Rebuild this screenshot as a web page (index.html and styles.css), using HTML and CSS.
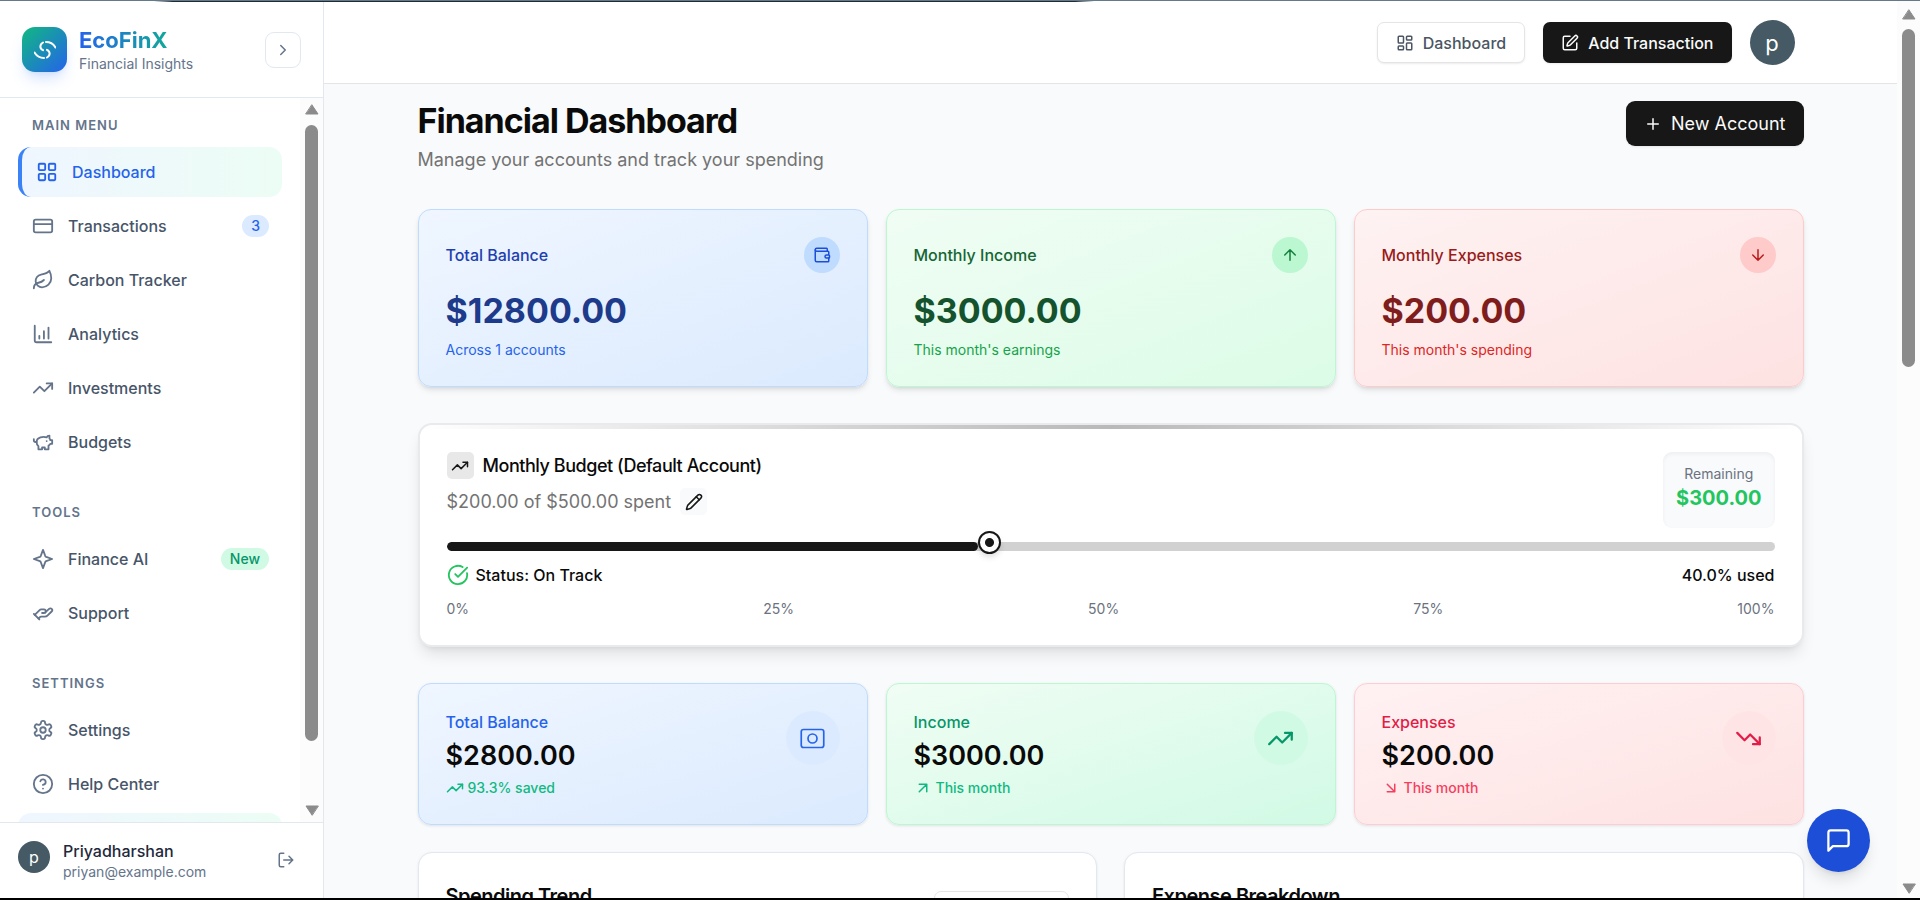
FILE: index.html
```html
<!DOCTYPE html>
<html lang="en">
<head>
<meta charset="utf-8">
<meta name="viewport" content="width=device-width, initial-scale=1">
<title>EcoFinX</title>
<link rel="stylesheet" href="styles.css">
</head>
<body>
<svg class="sprite" aria-hidden="true">
  <symbol id="swirl" viewBox="0 0 22 18"><path d="M9 1.5C5.5 3.5 5.5 7.5 9 9.2M12 1c4 0 7.500 2 9.500 5.500M13 16.500c3.500-2 3.500-6 0-7.700M10 17C6 17 2.500 15 .5 11.500"/></symbol>
  <symbol id="chevron" viewBox="0 0 24 24"><path d="m9 18 6-6-6-6"/></symbol>
  <symbol id="grid" viewBox="0 0 24 24"><rect x="3" y="3" width="7" height="7" rx="1"/><rect x="14" y="3" width="7" height="7" rx="1"/><rect x="14" y="14" width="7" height="7" rx="1"/><rect x="3" y="14" width="7" height="7" rx="1"/></symbol>
  <symbol id="layout" viewBox="0 0 24 24"><rect x="3" y="3" width="7" height="9" rx="1"/><rect x="14" y="3" width="7" height="5" rx="1"/><rect x="14" y="12" width="7" height="9" rx="1"/><rect x="3" y="16" width="7" height="5" rx="1"/></symbol>
  <symbol id="card" viewBox="0 0 24 24"><rect x="2" y="5" width="20" height="14" rx="2"/><path d="M2 10h20"/></symbol>
  <symbol id="leaf" viewBox="0 0 24 24"><path d="M11 20A7 7 0 0 1 9.800 6.100C15.500 5 17 4.480 19 2c1 2 2 4.180 2 8 0 5.500-4.780 10-10 10Z"/><path d="M2 21c0-3 1.850-5.360 5.080-6C9.500 14.520 12 13 13 12"/></symbol>
  <symbol id="chart" viewBox="0 0 24 24"><path d="M3 3v16a2 2 0 0 0 2 2h16M13 17V9M18 17V5M8 17v-3"/></symbol>
  <symbol id="up" viewBox="0 0 24 24"><path d="M16 7h6v6"/><path d="m22 7-8.500 8.500-5-5L2 17"/></symbol>
  <symbol id="down" viewBox="0 0 24 24"><path d="M16 17h6v-6"/><path d="m22 17-8.500-8.500-5 5L2 7"/></symbol>
  <symbol id="piggy" viewBox="0 0 24 24"><path d="M19 5c-1.500 0-2.800 1.400-3 2-3.500-1.500-11-.3-11 5 0 1.800 0 3 2 4.500V20h4v-2h3v2h4v-4c1-.5 1.700-1 2-2h2v-4h-2c0-1-.5-1.500-1-2V5z"/><path d="M2 9v1c0 1.100.9 2 2 2h1M16 11h.01"/></symbol>
  <symbol id="sparkle" viewBox="0 0 24 24"><path d="m12 2 2.400 6.500a2 2 0 0 0 1.100 1.100L22 12l-6.500 2.400a2 2 0 0 0-1.100 1.100L12 22l-2.400-6.500a2 2 0 0 0-1.100-1.100L2 12l6.500-2.400a2 2 0 0 0 1.100-1.100z"/></symbol>
  <symbol id="hand" viewBox="0 0 24 24"><path d="M11 12h2a2 2 0 1 0 0-4h-3c-.6 0-1.100.2-1.400.6L3 14"/><path d="m7 18 1.600-1.400c.3-.4.8-.6 1.400-.6h4c1.100 0 2.100-.4 2.800-1.200l4.600-4.400a2 2 0 0 0-2.750-2.910l-4.200 3.900"/><path d="m2 13 6 6"/></symbol>
  <symbol id="gear" viewBox="0 0 24 24"><path d="M12.220 2h-.44a2 2 0 0 0-2 2v.18a2 2 0 0 1-1 1.730l-.43.25a2 2 0 0 1-2 0l-.15-.08a2 2 0 0 0-2.730.73l-.22.38a2 2 0 0 0 .73 2.730l.15.1a2 2 0 0 1 1 1.720v.51a2 2 0 0 1-1 1.740l-.15.09a2 2 0 0 0-.73 2.730l.22.38a2 2 0 0 0 2.730.73l.15-.08a2 2 0 0 1 2 0l.43.25a2 2 0 0 1 1 1.730V20a2 2 0 0 0 2 2h.44a2 2 0 0 0 2-2v-.18a2 2 0 0 1 1-1.730l.43-.25a2 2 0 0 1 2 0l.15.08a2 2 0 0 0 2.730-.73l.22-.39a2 2 0 0 0-.73-2.730l-.15-.08a2 2 0 0 1-1-1.740v-.5a2 2 0 0 1 1-1.740l.15-.09a2 2 0 0 0 .73-2.730l-.22-.38a2 2 0 0 0-2.730-.73l-.15.08a2 2 0 0 1-2 0l-.43-.25a2 2 0 0 1-1-1.730V4a2 2 0 0 0-2-2z"/><circle cx="12" cy="12" r="3"/></symbol>
  <symbol id="help" viewBox="0 0 24 24"><circle cx="12" cy="12" r="10"/><path d="M9.090 9a3 3 0 0 1 5.830 1c0 2-3 3-3 3M12 17h.01"/></symbol>
  <symbol id="logout" viewBox="0 0 24 24"><path d="M9 21H5a2 2 0 0 1-2-2V5a2 2 0 0 1 2-2h4M16 17l5-5-5-5M21 12H9"/></symbol>
  <symbol id="edit" viewBox="0 0 24 24"><path d="M12 3H5a2 2 0 0 0-2 2v14a2 2 0 0 0 2 2h14a2 2 0 0 0 2-2v-7"/><path d="M18.375 2.625a1 1 0 0 1 3 3l-9.013 9.014a2 2 0 0 1-.853.505l-2.873.84a.5.5 0 0 1-.62-.62l.84-2.873a2 2 0 0 1 .506-.852z"/></symbol>
  <symbol id="plus" viewBox="0 0 24 24"><path d="M5 12h14M12 5v14"/></symbol>
  <symbol id="wallet" viewBox="0 0 24 24"><path d="M19 7V4a1 1 0 0 0-1-1H5a2 2 0 0 0 0 4h15a1 1 0 0 1 1 1v4h-3a2 2 0 0 0 0 4h3a1 1 0 0 0 1-1v-2a1 1 0 0 0-1-1"/><path d="M3 5v14a2 2 0 0 0 2 2h15a1 1 0 0 0 1-1v-4"/></symbol>
  <symbol id="arrow-up" viewBox="0 0 24 24"><path d="m5 12 7-7 7 7M12 19V5"/></symbol>
  <symbol id="arrow-down" viewBox="0 0 24 24"><path d="M12 5v14M19 12l-7 7-7-7"/></symbol>
  <symbol id="pencil" viewBox="0 0 24 24"><path d="M21.174 6.812a1 1 0 0 0-3.986-3.987L3.842 16.174a2 2 0 0 0-.5.83l-1.321 4.352a.5.5 0 0 0 .623.622l4.353-1.320a2 2 0 0 0 .83-.497z"/><path d="m15 5 4 4"/></symbol>
  <symbol id="check" viewBox="0 0 24 24"><path d="M21.801 10A10 10 0 1 1 17 3.335"/><path d="m9 11 3 3L22 4"/></symbol>
  <symbol id="note" viewBox="0 0 24 24"><rect x="2" y="4" width="20" height="16" rx="2"/><circle cx="12" cy="12" r="4"/></symbol>
  <symbol id="ne" viewBox="0 0 24 24"><path d="M7 7h10v10M7 17 17 7"/></symbol>
  <symbol id="se" viewBox="0 0 24 24"><path d="m7 7 10 10M17 7v10H7"/></symbol>
  <symbol id="chat" viewBox="0 0 24 24"><path d="M21 15a2 2 0 0 1-2 2H7l-4 4V5a2 2 0 0 1 2-2h14a2 2 0 0 1 2 2z"/></symbol>
  <symbol id="tri-up" viewBox="0 0 14 11"><path d="M7 1 13 10H1z"/></symbol>
  <symbol id="tri-down" viewBox="0 0 14 11"><path d="M7 10 1 1h12z"/></symbol>
</svg>

<div class="app">
  <aside class="sidebar">
    <div class="brand">
      <div class="brand-mark"><svg class="brand-icon"><use href="#swirl"/></svg></div>
      <div class="brand-text">
        <div class="brand-name">EcoFinX</div>
        <div class="brand-sub">Financial Insights</div>
      </div>
      <button class="collapse" type="button" aria-label="Toggle sidebar"><svg class="icon-sm"><use href="#chevron"/></svg></button>
    </div>
    <div class="nav-area">
      <nav class="nav">
        <section class="nav-group">
          <h2 class="nav-title">MAIN MENU</h2>
          <a class="nav-item active" href="#"><svg class="icon-md"><use href="#grid"/></svg><span>Dashboard</span></a>
          <a class="nav-item" href="#"><svg class="icon-md"><use href="#card"/></svg><span>Transactions</span><span class="pill pill-blue">3</span></a>
          <a class="nav-item" href="#"><svg class="icon-md"><use href="#leaf"/></svg><span>Carbon Tracker</span></a>
          <a class="nav-item" href="#"><svg class="icon-md"><use href="#chart"/></svg><span>Analytics</span></a>
          <a class="nav-item" href="#"><svg class="icon-md"><use href="#up"/></svg><span>Investments</span></a>
          <a class="nav-item" href="#"><svg class="icon-md"><use href="#piggy"/></svg><span>Budgets</span></a>
        </section>
        <section class="nav-group">
          <h2 class="nav-title">TOOLS</h2>
          <a class="nav-item" href="#"><svg class="icon-md"><use href="#sparkle"/></svg><span>Finance AI</span><span class="pill pill-green">New</span></a>
          <a class="nav-item" href="#"><svg class="icon-md"><use href="#hand"/></svg><span>Support</span></a>
        </section>
        <section class="nav-group">
          <h2 class="nav-title">SETTINGS</h2>
          <a class="nav-item" href="#"><svg class="icon-md"><use href="#gear"/></svg><span>Settings</span></a>
          <a class="nav-item" href="#"><svg class="icon-md"><use href="#help"/></svg><span>Help Center</span></a>
          <div class="promo"></div>
        </section>
      </nav>
      <div class="scrollbar nav-scroll" aria-hidden="true">
        <svg class="tri"><use href="#tri-up"/></svg>
        <div class="rail"><div class="thumb"></div></div>
        <svg class="tri"><use href="#tri-down"/></svg>
      </div>
    </div>
    <div class="profile">
      <div class="avatar avatar-sm">p</div>
      <div class="profile-text">
        <div class="profile-name">Priyadharshan</div>
        <div class="profile-mail">priyan@example.com</div>
      </div>
      <button class="logout" type="button" aria-label="Log out"><svg class="icon-sm"><use href="#logout"/></svg></button>
    </div>
  </aside>

  <div class="page">
    <header class="topbar">
      <div class="topbar-inner">
        <button class="btn btn-light" type="button"><svg class="icon-sm"><use href="#layout"/></svg>Dashboard</button>
        <button class="btn btn-dark" type="button"><svg class="icon-sm"><use href="#edit"/></svg>Add Transaction</button>
        <div class="avatar avatar-lg">p</div>
      </div>
    </header>
    <main class="content">
      <div class="heading">
        <div>
          <h1 class="title">Financial Dashboard</h1>
          <p class="subtitle">Manage your accounts and track your spending</p>
        </div>
        <button class="btn btn-dark btn-new" type="button"><svg class="icon-sm"><use href="#plus"/></svg>New Account</button>
      </div>

      <div class="trio">
        <section class="stat blue">
          <div class="stat-head"><h2 class="stat-label">Total Balance</h2><div class="dot"><svg class="icon-sm"><use href="#wallet"/></svg></div></div>
          <div class="stat-value">$12800.00</div>
          <p class="stat-note">Across 1 accounts</p>
        </section>
        <section class="stat green">
          <div class="stat-head"><h2 class="stat-label">Monthly Income</h2><div class="dot"><svg class="icon-sm"><use href="#arrow-up"/></svg></div></div>
          <div class="stat-value">$3000.00</div>
          <p class="stat-note">This month's earnings</p>
        </section>
        <section class="stat red">
          <div class="stat-head"><h2 class="stat-label">Monthly Expenses</h2><div class="dot"><svg class="icon-sm"><use href="#arrow-down"/></svg></div></div>
          <div class="stat-value">$200.00</div>
          <p class="stat-note">This month's spending</p>
        </section>
      </div>

      <section class="budget">
        <div class="budget-glow"></div>
        <div class="budget-head">
          <div class="budget-info">
            <div class="budget-row"><div class="chip"><svg class="icon-sm"><use href="#up"/></svg></div><h2 class="budget-title">Monthly Budget (Default Account)</h2></div>
            <div class="budget-row"><p class="budget-spent">$200.00 of $500.00 spent</p><button class="chip chip-edit" type="button" aria-label="Edit budget"><svg class="icon-sm"><use href="#pencil"/></svg></button></div>
          </div>
          <div class="remaining"><div class="remaining-label">Remaining</div><div class="remaining-value">$300.00</div></div>
        </div>
        <div class="meter">
          <progress class="bar" value="40" max="100" aria-label="Budget used"></progress>
          <span class="marker" style="left:40%"></span>
        </div>
        <div class="status"><span class="status-left"><svg class="icon-md ok"><use href="#check"/></svg>Status: On Track</span><span>40.0% used</span></div>
        <div class="scale"><span>0%</span><span>25%</span><span>50%</span><span>75%</span><span>100%</span></div>
      </section>

      <div class="trio">
        <section class="sum sum-blue">
          <div>
            <h2 class="sum-label">Total Balance</h2>
            <div class="sum-value">$2800.00</div>
            <p class="sum-note"><svg class="icon-sm"><use href="#up"/></svg>93.3% saved</p>
          </div>
          <div class="orb"><svg class="icon-lg thin"><use href="#note"/></svg></div>
        </section>
        <section class="sum sum-green">
          <div>
            <h2 class="sum-label">Income</h2>
            <div class="sum-value">$3000.00</div>
            <p class="sum-note"><svg class="icon-sm"><use href="#ne"/></svg>This month</p>
          </div>
          <div class="orb"><svg class="icon-lg"><use href="#up"/></svg></div>
        </section>
        <section class="sum sum-red">
          <div>
            <h2 class="sum-label">Expenses</h2>
            <div class="sum-value">$200.00</div>
            <p class="sum-note"><svg class="icon-sm"><use href="#se"/></svg>This month</p>
          </div>
          <div class="orb"><svg class="icon-lg"><use href="#down"/></svg></div>
        </section>
      </div>

      <div class="duo">
        <section class="panel"><h2 class="panel-title">Spending Trend</h2><select class="range" aria-label="Period"><option></option></select></section>
        <section class="panel"><h2 class="panel-title">Expense Breakdown</h2></section>
      </div>
    </main>
  </div>

  <div class="scrollbar page-scroll" aria-hidden="true">
    <svg class="tri"><use href="#tri-up"/></svg>
    <div class="rail"><div class="thumb"></div></div>
    <svg class="tri"><use href="#tri-down"/></svg>
  </div>
</div>
<div class="edge-top"></div>
<div class="edge-bottom"></div>
<button class="fab" type="button" aria-label="Open chat"><svg class="icon-lg"><use href="#chat"/></svg></button>
</body>
</html>
```
FILE: styles.css
```css
* { box-sizing: border-box; }
body {
  margin: 0;
  height: 100vh;
  overflow: hidden;
  font-family: Inter, "Liberation Sans", sans-serif;
  font-size: 16px;
  line-height: 22px;
  color: #0a0a0a;
  background: #f9fafc;
}
h1, h2, p { margin: 0; font-weight: 500; font-size: inherit; }
button { font: inherit; color: inherit; cursor: pointer; padding: 0; border: 0; background: none; }
a { color: inherit; text-decoration: none; }
svg { fill: none; stroke: currentColor; stroke-width: 2; stroke-linecap: round; stroke-linejoin: round; flex: none; display: block; }
.sprite { position: absolute; width: 0; height: 0; }
.icon-sm { width: 18px; height: 18px; }
.icon-md { width: 22px; height: 22px; }
.icon-lg { width: 27px; height: 27px; }
.thin { stroke-width: 1.5; }

.app { display: flex; height: 100vh; }

.sidebar { width: 324px; flex: none; display: flex; flex-direction: column; background: #fff; border-right: 1px solid #e2e8f0; }
.brand { display: flex; align-items: center; gap: 12px; height: 98px; padding: 2px 22px 0; border-bottom: 1px solid #e2e8f0; }
.brand-mark { display: flex; align-items: center; justify-content: center; width: 45px; height: 45px; border-radius: 13px; background: linear-gradient(135deg, #10b981, #2563eb); color: #fff; box-shadow: 0 10px 15px -3px rgba(59, 130, 246, .2), 0 4px 6px -4px rgba(59, 130, 246, .2); }
.brand-icon { width: 22px; height: 18px; overflow: visible; }
.brand-text { flex: 1; }
.brand-name { width: max-content; font-size: 22px; line-height: 28px; font-weight: 700; color: transparent; background: linear-gradient(90deg, #2563eb, #10a998); -webkit-background-clip: text; background-clip: text; }
.brand-sub { font-size: 14px; line-height: 20px; color: #64748b; }
.collapse { display: flex; align-items: center; justify-content: center; width: 36px; height: 36px; border: 1px solid #e2e8f0; border-radius: 9px; color: #64748b; background: #fff; }

.nav-area { flex: 1; min-height: 0; display: flex; }
.nav { flex: 1; overflow: hidden; padding: 18px 18px 0; display: flex; flex-direction: column; gap: 36px; }
.nav-group { display: flex; flex-direction: column; gap: 4px; flex: none; }
.nav-title { padding: 0 14px; margin-bottom: 9px; font-size: 13px; line-height: 18px; font-weight: 600; letter-spacing: 1px; color: #64748b; }
.nav-item { display: flex; align-items: center; gap: 14px; height: 50px; padding: 0 13px 0 14px; border-radius: 13px; font-weight: 500; color: #475569; }
.nav-item svg { color: #64748b; }
.nav-item.active { border-left: 4px solid #3b82f6; color: #2563eb; background: linear-gradient(90deg, #eff6ff, #ecfdf5); }
.nav-item.active svg { color: #2563eb; }
.pill { margin-left: auto; padding: 0 9px; border-radius: 11px; font-size: 14px; line-height: 22px; }
.pill-blue { background: #dbeafe; color: #2563eb; }
.pill-green { background: #d1fae5; color: #059669; }
.promo { height: 90px; border-radius: 13px; background: linear-gradient(90deg, #eff6ff, #ecfdf5); }

.scrollbar { flex: none; width: 23px; display: flex; flex-direction: column; align-items: center; background: #fcfcfc; color: #8b8b8b; }
.tri { width: 14px; height: 11px; fill: currentColor; stroke-width: 1; }
.rail { flex: 1; align-self: stretch; display: flex; justify-content: center; }
.thumb { width: 13px; border-radius: 7px; background: #8b8b8b; }
.nav-scroll { padding: 6px 0; }
.nav-scroll .rail { margin: 10px 0; }
.nav-scroll .thumb { height: 92%; }
.page-scroll { padding: 9px 0 6px; }
.page-scroll .rail { margin: 9px 0; }
.page-scroll .thumb { height: 40%; }

.profile { flex: none; display: flex; align-items: flex-start; gap: 13px; height: 78px; padding: 18px; border-top: 1px solid #e2e8f0; }
.avatar { display: flex; align-items: center; justify-content: center; flex: none; border-radius: 50%; background: #455a64; color: #fff; }
.avatar-sm { width: 32px; height: 32px; }
.avatar-lg { width: 45px; height: 45px; font-size: 22px; }
.profile-text { flex: 1; }
.profile-name { font-weight: 500; line-height: 20px; color: #1e293b; }
.profile-mail { font-size: 14px; line-height: 22px; color: #64748b; }
.logout { color: #64748b; padding: 10px; }

.page { flex: 1; min-width: 0; overflow: hidden; }
.topbar { background: #fff; border-bottom: 1px solid #e5e5e5; }
.topbar-inner { display: flex; align-items: center; justify-content: flex-end; gap: 18px; max-width: 1440px; height: 83px; margin: 0 auto; padding: 2px 36px 0; }
.btn { display: flex; align-items: center; gap: 9px; height: 41px; padding: 0 18px; border-radius: 7px; font-weight: 500; box-shadow: 0 1px 2px rgba(0, 0, 0, .08); }
.btn-light { border: 1px solid #e5e5e5; background: #fff; color: #4b5563; }
.btn-dark { background: #171717; color: #fafafa; }
.btn-new { height: 45px; border-radius: 9px; font-size: 18px; font-weight: 400; }

.content { max-width: 1440px; margin: 0 auto; padding: 17px 27px 0; display: flex; flex-direction: column; gap: 36px; }
.heading { display: flex; justify-content: space-between; align-items: flex-start; }
.title { font-size: 34px; line-height: 40px; font-weight: 700; letter-spacing: -1px; }
.subtitle { margin-top: 5px; font-size: 18px; line-height: 27px; font-weight: 400; color: #737373; }

.trio { display: grid; grid-template-columns: repeat(3, 1fr); gap: 18px; }
.stat { padding: 27px; border: 1px solid; border-radius: 13px; box-shadow: 0 4px 6px -1px rgba(0, 0, 0, .1), 0 2px 4px -2px rgba(0, 0, 0, .1); }
.stat-head { display: flex; justify-content: space-between; align-items: center; margin-bottom: 18px; }
.dot { display: flex; align-items: center; justify-content: center; width: 36px; height: 36px; border-radius: 50%; }
.stat-value { font-size: 34px; line-height: 40px; font-weight: 700; }
.stat-note { margin-top: 10px; font-size: 14px; line-height: 18px; font-weight: 400; }
.blue { border-color: #bfdbfe; background: linear-gradient(to bottom right, #eff6ff, #dbeafe); color: #1e3a8a; }
.blue .stat-label { color: #1e40af; }
.blue .stat-note { color: #2563eb; }
.blue .dot { background: #bfdbfe; color: #1d4ed8; }
.green { border-color: #bbf7d0; background: linear-gradient(to bottom right, #f0fdf4, #dcfce7); color: #14532d; }
.green .stat-label { color: #166534; }
.green .stat-note { color: #16a34a; }
.green .dot { background: #bbf7d0; color: #15803d; }
.red { border-color: #fecaca; background: linear-gradient(to bottom right, #fef2f2, #fee2e2); color: #7f1d1d; }
.red .stat-label { color: #991b1b; }
.red .stat-note { color: #dc2626; }
.red .dot { background: #fecaca; color: #b91c1c; }

.budget { display: flex; flex-direction: column; overflow: hidden; border: 2px solid #e8eaec; border-radius: 14px; background: #fff; padding: 0 27px 27px; box-shadow: 0 10px 15px -3px rgba(0, 0, 0, .1), 0 4px 6px -4px rgba(0, 0, 0, .1); }
.budget-glow { height: 4px; margin: 0 -27px 23px; background: linear-gradient(90deg, transparent, rgba(23, 23, 23, .3), transparent); }
.budget-head { display: flex; justify-content: space-between; height: 76px; }
.budget-info { display: flex; flex-direction: column; gap: 9px; }
.budget-row { display: flex; align-items: center; gap: 9px; height: 27px; }
.chip { display: flex; align-items: center; justify-content: center; width: 27px; height: 27px; border-radius: 5px; background: #e8e8e8; color: #171717; }
.chip-edit { background: #f8fafc; }
.budget-title { font-size: 18px; letter-spacing: -.025em; }
.budget-spent { font-size: 18px; font-weight: 400; color: #737373; }
.remaining { padding: 12px 13px; border-radius: 9px; text-align: center; background: #f8fafc; box-shadow: inset 0 2px 4px rgba(0, 0, 0, .05); }
.remaining-label { font-size: 14px; line-height: 20px; color: #6b7280; }
.remaining-value { font-size: 20px; line-height: 28px; font-weight: 700; color: #22c55e; }
.meter { position: relative; height: 9px; margin-top: 14px; }
.bar { display: block; width: 100%; height: 9px; appearance: none; border: 0; border-radius: 5px; overflow: hidden; background: #d1d1d1; }
.bar::-webkit-progress-bar { background: #d1d1d1; }
.bar::-webkit-progress-value { background: #171717; border-radius: 5px; }
.marker { position: absolute; top: -11px; width: 23px; height: 23px; border: 2px solid #171717; border-radius: 50%; background: radial-gradient(circle, #171717 4px, #fff 5px); box-shadow: 0 4px 6px -1px rgba(0, 0, 0, .15); }
.status { display: flex; justify-content: space-between; align-items: center; margin-top: 13px; font-weight: 500; }
.status-left { display: flex; align-items: center; gap: 7px; }
.ok { color: #22c55e; }
.scale { display: flex; justify-content: space-between; margin-top: 14px; font-size: 14px; line-height: 18px; color: #6b7280; }

.sum { display: flex; justify-content: space-between; align-items: flex-start; padding: 27px; border: 1px solid; border-radius: 13px; box-shadow: 0 1px 3px rgba(0, 0, 0, .1); }
.sum-value { margin-top: 5px; font-size: 27px; line-height: 36px; font-weight: 600; }
.sum-note { display: flex; align-items: center; gap: 4px; margin-top: 5px; font-size: 14px; line-height: 18px; color: #10b981; }
.orb { display: flex; align-items: center; justify-content: center; width: 54px; height: 54px; border-radius: 50%; }
.sum-blue { border-color: #bfdbfe; background: linear-gradient(to bottom right, #eff6ff, #dbeafe); }
.sum-blue .sum-label { color: #2563eb; }
.sum-blue .orb { background: #dbeafe; color: #2563eb; }
.sum-green { border-color: #bbf7d0; background: linear-gradient(to bottom right, #f0fdf4, #d1fae5); }
.sum-green .sum-label { color: #059669; }
.sum-green .orb { background: #d1fae5; color: #059669; }
.sum-red { border-color: #fecdd3; background: linear-gradient(to bottom right, #fff1f2, #fee2e2); }
.sum-red .sum-label { color: #e11d48; }
.sum-red .sum-note { color: #f43f5e; }
.sum-red .orb { background: #ffe4e6; color: #e11d48; }

.duo { display: grid; grid-template-columns: 1fr 1fr; gap: 27px; margin-top: -9px; }
.panel { display: flex; justify-content: space-between; align-items: flex-start; min-height: 400px; padding: 28px 27px; border: 1px solid #e2e8f0; border-radius: 14px; background: #fff; box-shadow: 0 1px 3px rgba(0, 0, 0, .08); }
.panel-title { font-size: 20px; line-height: 30px; font-weight: 600; letter-spacing: -.025em; }
.range { width: 135px; height: 40px; margin-top: 10px; border: 1px solid #e5e5e5; border-radius: 7px; background: #fff; appearance: none; }

.fab { position: fixed; right: 50px; bottom: 28px; display: flex; align-items: center; justify-content: center; width: 63px; height: 63px; border-radius: 50%; background: #1d4ed8; color: #fff; box-shadow: 0 10px 15px -3px rgba(0, 0, 0, .12), 0 4px 6px -4px rgba(0, 0, 0, .12); }
.edge-top { position: fixed; inset: 0 0 auto; height: 2px; background: linear-gradient(#64798a, #64798a) 0 0 / 100% 1px no-repeat, linear-gradient(90deg, transparent 8%, #1f2a33 9%, #1f2a33 56%, transparent 57%); }
.edge-bottom { position: fixed; inset: auto 0 0; height: 2px; background: #000; }
```
